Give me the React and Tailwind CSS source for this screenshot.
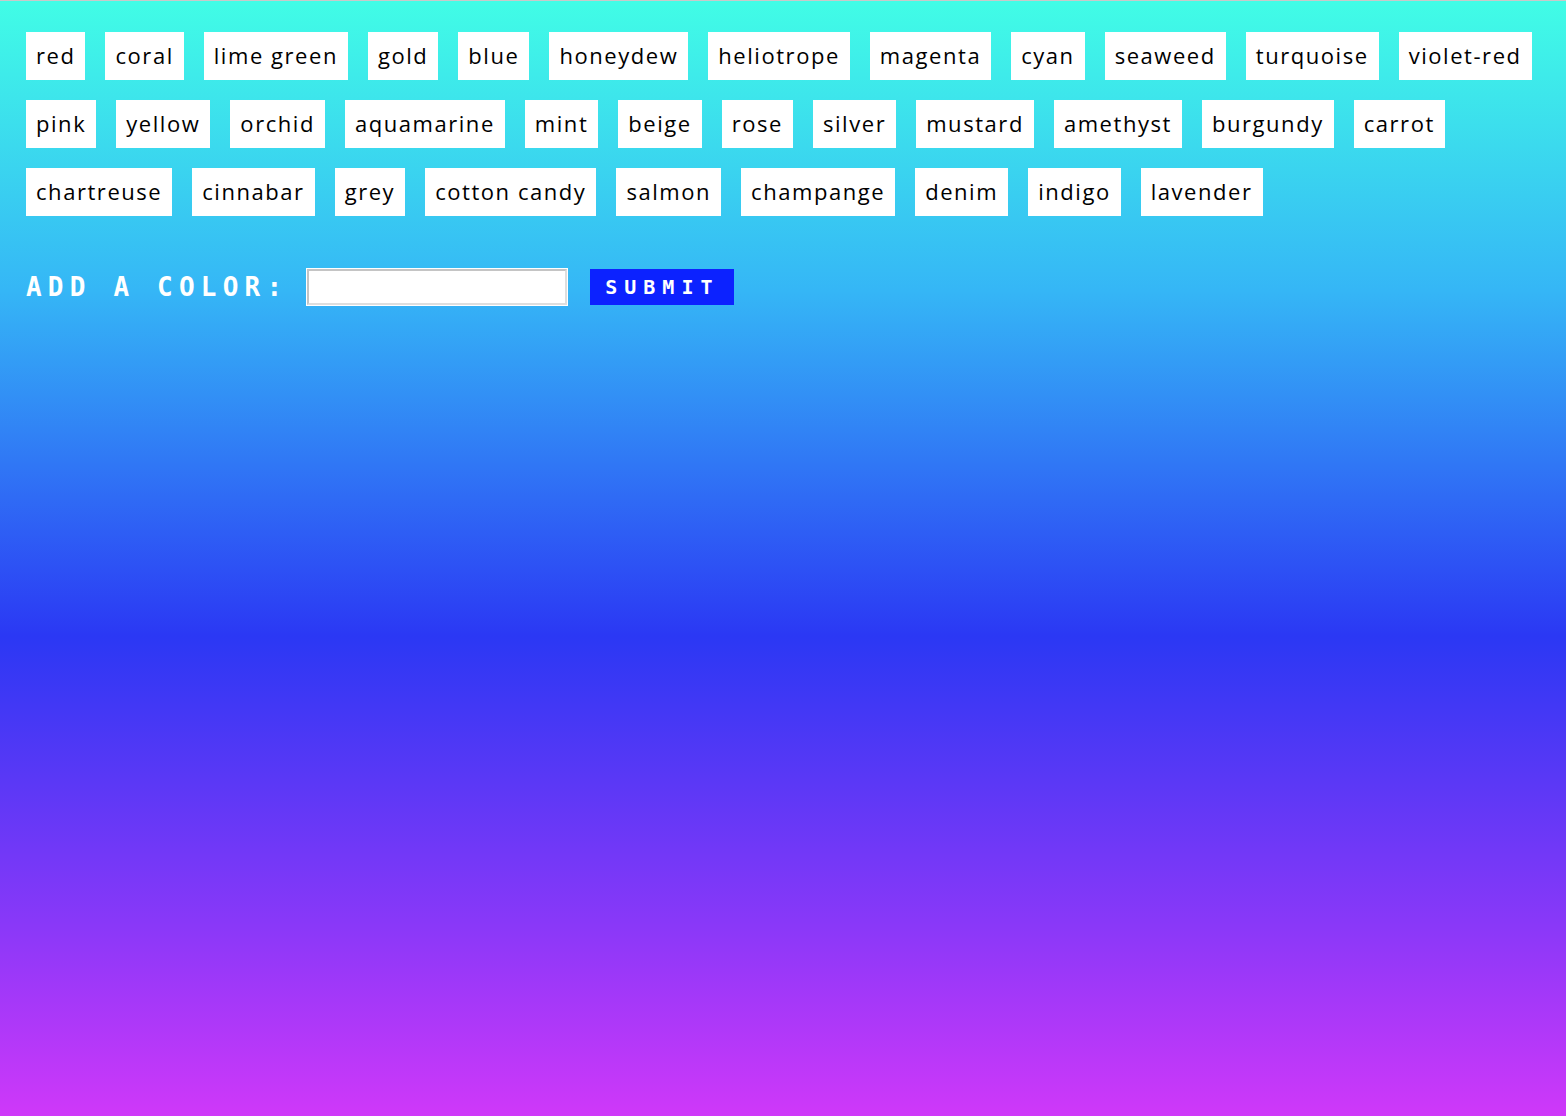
import React, { useState } from 'react';

// 色タグの一覧（行ごとに並べる）
const ROWS = [
  ['red', 'coral', 'lime green', 'gold', 'blue', 'honeydew', 'heliotrope', 'magenta', 'cyan', 'seaweed', 'turquoise', 'violet-red'],
  ['pink', 'yellow', 'orchid', 'aquamarine', 'mint', 'beige', 'rose', 'silver', 'mustard', 'amethyst', 'burgundy', 'carrot'],
  ['chartreuse', 'cinnabar', 'grey', 'cotton candy', 'salmon', 'champange', 'denim', 'indigo', 'lavender'],
];

const Tag = ({ name }) => (
  <div className="h-12 px-[10px] pb-[2px] bg-white flex items-center text-[22px] text-black font-['Open_Sans',sans-serif] tracking-[1.55px] leading-none whitespace-nowrap">
    {name}
  </div>
);

export default function App() {
  const [value, setValue] = useState('');

  return (
    <div className="min-h-screen w-full border-t border-[#c9c9c9] bg-[linear-gradient(180deg,#41fde6_0%,#35b6f6_26%,#2b38f4_57%,#8a38f8_83%,#cf38f9_100%)] pt-[31px] px-[26px]">
      <div className="flex flex-col gap-5">
        {ROWS.map((row, i) => (
          <div key={i} className="flex gap-5">
            {row.map((c) => (
              <Tag key={c} name={c} />
            ))}
          </div>
        ))}
      </div>

      <form
        className="mt-[52px] flex items-center"
        onSubmit={(e) => e.preventDefault()}
      >
        <label className="text-white font-bold text-[26px] tracking-[6.2px] font-['DejaVu_Sans_Mono',monospace] leading-none">
          ADD A COLOR:
        </label>
        <div className="ml-[18px] bg-white p-px">
          <input
            type="text"
            value={value}
            onChange={(e) => setValue(e.target.value)}
            className="block w-[260px] h-[36px] bg-white border-2 border-[#c4c4c4] border-b-[#dedede] border-r-[#dedede] outline-none px-1"
          />
        </div>
        <button
          type="submit"
          className="ml-[22px] h-9 w-[144px] bg-[#0c22ff] text-white font-bold text-[20px] tracking-[7px] font-['DejaVu_Sans_Mono',monospace] leading-none flex items-center justify-start pl-[15px]"
        >
          SUBMIT
        </button>
      </form>
    </div>
  );
}
